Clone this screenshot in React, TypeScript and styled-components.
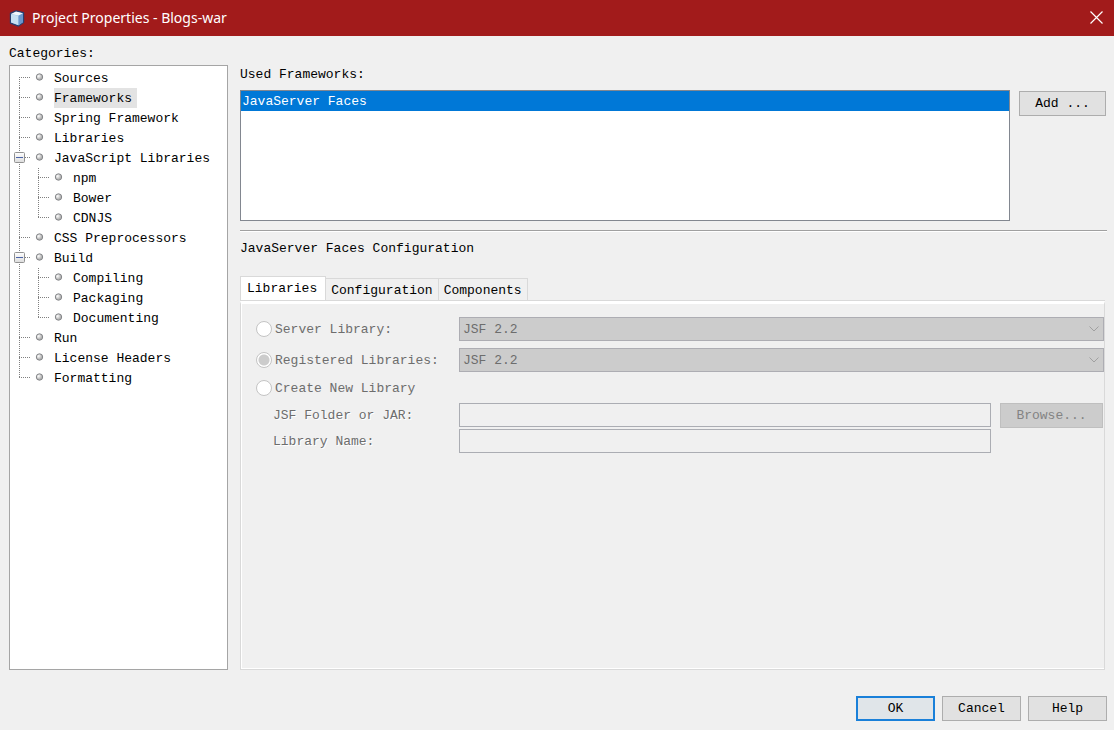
import React, { useState } from "react";
import styled, { createGlobalStyle, css } from "styled-components";

const GlobalStyle = createGlobalStyle`
  *, *::before, *::after { box-sizing: border-box; }
  body { margin: 0; background: #f0f0f0; }
  body, button, input, select {
    font-family: "Liberation Mono", "Courier New", monospace;
    font-size: 13px;
    line-height: 20px;
    color: #000;
  }
`;

const Dialog = styled.div`
  display: flex;
  flex-direction: column;
  min-height: 100vh;
`;

const TitleBar = styled.header`
  display: flex;
  align-items: center;
  gap: 7px;
  height: 36px;
  padding: 0 9px;
  background: #a21b1b;
  color: #fff;
`;

const Title = styled.h1`
  flex: 1;
  margin: 0;
  font: 400 14px/20px "Noto Sans", "Open Sans", sans-serif;
`;

const CloseButton = styled.button`
  display: flex;
  padding: 0 2px 2px;
  border: 0;
  background: none;
`;

const Body = styled.main`
  flex: 1;
  display: flex;
  gap: 12px;
  padding: 8px 7px 0 9px;
`;

const Sidebar = styled.nav`
  display: flex;
  flex-direction: column;
  gap: 1px;
  width: 219px;
`;

const Label = styled.h2`
  margin: 0;
  font-size: 13px;
  font-weight: 400;
  line-height: 20px;
`;

const Tree = styled.ul`
  flex: 1;
  margin: 0;
  padding: 2px 0;
  list-style: none;
  border: 1px solid #a5a5a5;
  background: #fff;
`;

const TreeRow = styled.li`
  display: flex;
  height: 20px;
`;

const TreeLabel = styled.button<{ $selected: boolean }>`
  height: 20px;
  padding: 1px 5px 0 0;
  border: 0;
  background: ${(p) => (p.$selected ? "#e3e3e3" : "transparent")};
`;

const Content = styled.section`
  flex: 1;
  min-width: 0;
  display: flex;
  flex-direction: column;
  padding-top: 21px;
`;

const FrameworksRow = styled.div`
  display: flex;
  align-items: flex-start;
  gap: 9px;
  margin-top: 5px;
  padding: 0 1px 9px 0;
  border-bottom: 1px solid #a0a0a0;
  box-shadow: 0 1px #fff;
`;

const FrameworkList = styled.ul`
  flex: 1;
  height: 131px;
  margin: 0;
  padding: 0;
  list-style: none;
  border: 1px solid #828790;
  background: #fff;
`;

const FrameworkItem = styled.li`
  height: 20px;
  padding: 1px 1px 0;
  background: #0078d7;
  color: #fff;
`;

const Button = styled.button<{ $width: number; $primary?: boolean }>`
  width: ${(p) => p.$width}px;
  height: 25px;
  padding: 0;
  border: 1px solid #adadad;
  background: #e1e1e1;
  ${(p) =>
    p.$primary &&
    css`
      border: 2px solid #1a80d9;
      background: #e0e5e9;
    `}
  &:disabled {
    border-color: #bfbfbf;
    background: #ccc;
    color: #838383;
  }
`;

const AddSlot = styled.div`
  display: flex;
  padding-top: 1px;
`;

const ConfigHeading = styled(Label)`
  margin-top: 8px;
`;

const TabList = styled.div`
  display: flex;
  align-items: flex-end;
  margin-top: 17px;
`;

const Tab = styled.button<{ $active: boolean }>`
  height: ${(p) => (p.$active ? 25 : 23)}px;
  padding: ${(p) => (p.$active ? "0 8px 1px 6px" : "1px 5px 0")};
  border: 1px solid #d9d9d9;
  border-left-width: ${(p) => (p.$active ? 1 : 0)}px;
  border-bottom: 0;
  background: ${(p) => (p.$active ? "#fff" : "#f0f0f0")};
`;

const TabPanel = styled.div`
  flex: 1;
  margin-right: 2px;
  padding: 12px 0 12px 14px;
  border: 1px solid #d9d9d9;
  border-top: 3px solid #fff;
  box-shadow: inset 1px 0 #fff, inset 0 -1px #fff, 0 -1px #d9d9d9;
`;

const Form = styled.form`
  display: grid;
  grid-template-columns: 195px 1fr 103px;
  grid-template-rows: 31px 31px 24px 26px 24px;
  column-gap: 9px;
  align-items: start;
  padding: 1px 1px 0 0;
`;

const RadioLabel = styled.label<{ $short?: boolean }>`
  display: flex;
  align-items: center;
  gap: 3px;
  height: ${(p) => (p.$short ? 18 : 24)}px;
  padding-left: 1px;
  white-space: nowrap;
  color: #6d6d6d;
`;

const RadioText = styled.span`
  padding-top: 2px;
`;

const Radio = styled.input`
  appearance: none;
  flex: none;
  width: 16px;
  height: 16px;
  margin: 0;
  border: 1px solid #c4c4c4;
  border-radius: 50%;
  background: #fff;
  &:checked {
    background: radial-gradient(circle, #ccc 5px, #fff 6px);
  }
`;

const FieldLabel = styled.label`
  padding-left: 18px;
  line-height: 26px;
  color: #6d6d6d;
  text-shadow: 1px 1px #fff;
`;

const SelectBox = styled.div`
  grid-column: 2 / -1;
  display: grid;
  align-items: center;
  margin-right: -1px;
  > * { grid-area: 1 / 1; }
  > svg { justify-self: end; margin-right: 5px; }
`;

const Select = styled.select`
  appearance: none;
  width: 100%;
  height: 24px;
  padding: 1px 3px 0;
  border: 1px solid #adadb3;
  border-radius: 0;
  background: #ccc;
  &:disabled { color: #6d6d6d; opacity: 1; }
`;

const TextField = styled.input`
  width: 100%;
  height: 24px;
  padding: 0 3px;
  border: 1px solid #abadb3;
  background: #f0f0f0;
`;

const BrowseButton = styled(Button)`
  grid-column: 3;
`;

const Footer = styled.footer`
  display: flex;
  justify-content: flex-end;
  gap: 7px;
  padding: 26px 7px 9px;
`;

type Node = { label: string; level?: number; open?: boolean; last?: boolean };

const nodes: Node[] = [
  { label: "Sources" },
  { label: "Frameworks" },
  { label: "Spring Framework" },
  { label: "Libraries" },
  { label: "JavaScript Libraries", open: true },
  { label: "npm", level: 1 },
  { label: "Bower", level: 1 },
  { label: "CDNJS", level: 1, last: true },
  { label: "CSS Preprocessors" },
  { label: "Build", open: true },
  { label: "Compiling", level: 1 },
  { label: "Packaging", level: 1 },
  { label: "Documenting", level: 1, last: true },
  { label: "Run" },
  { label: "License Headers" },
  { label: "Formatting", last: true },
];

const TreeGuide = ({ node, first }: { node: Node; first: boolean }) => {
  const level = node.level ?? 0;
  const x = 9 + level * 19;
  const endY = node.last ? 10 : 20;
  return (
    <svg width={44 + level * 19} height="20" aria-hidden="true">
      <g stroke="#808080" strokeDasharray="1 1">
        {level === 1 && <path d="M9.5 0V20" />}
        <path d={`M${x + 0.5} ${first ? 9 : 0}V${endY}`} />
        <path d={`M${x} 9.5H${x + 11}`} />
      </g>
      {node.open && (
        <g>
          <rect x="4.5" y="4.5" width="10" height="10" rx="1" fill="url(#expander)" stroke="#919191" />
          <path d="M6 9.5H13" stroke="#4b63a7" />
        </g>
      )}
      <circle cx={x + 20.5} cy="9" r="3.2" fill="url(#bullet)" stroke="#85878a" />
    </svg>
  );
};

const Chevron = () => (
  <svg width="10" height="6" aria-hidden="true" pointerEvents="none">
    <path d="M.5.5L5 5L9.5.5" fill="none" stroke="#a0a0a0" />
  </svg>
);

const CubeIcon = () => (
  <svg width="16" height="17" viewBox="0 0 16 17" aria-hidden="true">
    <path d="M7 1L14.5 2.8V12.5L9.5 16L1.5 13V3.5Z" fill="#8fbce4" stroke="#2b3f70" strokeWidth="1.4" strokeLinejoin="round" />
    <path d="M7 1.5L14 3.2L9.5 5.6L2 3.9Z" fill="#f1f7fc" />
    <path d="M2 4.2L9.5 5.8V15.3L2 12.6Z" fill="#c6e0f3" />
    <path d="M14 3.5L9.5 5.8V15.3L14 12.2Z" fill="#6b97cd" />
  </svg>
);

const tabs = ["Libraries", "Configuration", "Components"];

export default function App() {
  const [selected, setSelected] = useState("Frameworks");
  const [tab, setTab] = useState("Libraries");

  return (
    <Dialog>
      <GlobalStyle />
      <TitleBar>
        <CubeIcon />
        <Title>Project Properties - Blogs-war</Title>
        <CloseButton aria-label="Close">
          <svg width="13" height="13" aria-hidden="true">
            <path d="M.5.5L12.5 12.5M12.5.5L.5 12.5" stroke="#fff" strokeWidth="1.2" />
          </svg>
        </CloseButton>
      </TitleBar>
      <svg width="0" height="0" display="block" aria-hidden="true">
        <defs>
          <linearGradient id="expander" x2="0" y2="1">
            <stop stopColor="#fff" />
            <stop offset="1" stopColor="#dcdcdc" />
          </linearGradient>
          <radialGradient id="bullet" cx=".35" cy=".35">
            <stop stopColor="#fff" />
            <stop offset="1" stopColor="#b4b4b4" />
          </radialGradient>
        </defs>
      </svg>
      <Body>
        <Sidebar>
          <Label>Categories:</Label>
          <Tree>
            {nodes.map((node, i) => (
              <TreeRow key={node.label}>
                <TreeGuide node={node} first={i === 0} />
                <TreeLabel $selected={selected === node.label} onClick={() => setSelected(node.label)}>
                  {node.label}
                </TreeLabel>
              </TreeRow>
            ))}
          </Tree>
        </Sidebar>
        <Content>
          <Label>Used Frameworks:</Label>
          <FrameworksRow>
            <FrameworkList role="listbox" aria-label="Used Frameworks">
              <FrameworkItem role="option" aria-selected="true">JavaServer Faces</FrameworkItem>
            </FrameworkList>
            <AddSlot>
              <Button $width={87}>Add ...</Button>
            </AddSlot>
          </FrameworksRow>
          <ConfigHeading>JavaServer Faces Configuration</ConfigHeading>
          <TabList role="tablist">
            {tabs.map((name) => (
              <Tab key={name} role="tab" aria-selected={tab === name} $active={tab === name} onClick={() => setTab(name)}>
                {name}
              </Tab>
            ))}
          </TabList>
          <TabPanel role="tabpanel">
            <Form>
              <RadioLabel>
                <Radio type="radio" name="source" disabled />
                <RadioText>Server Library:</RadioText>
              </RadioLabel>
              <SelectBox>
                <Select aria-label="Server Library" disabled>
                  <option>JSF 2.2</option>
                </Select>
                <Chevron />
              </SelectBox>
              <RadioLabel>
                <Radio type="radio" name="source" defaultChecked disabled />
                <RadioText>Registered Libraries:</RadioText>
              </RadioLabel>
              <SelectBox>
                <Select aria-label="Registered Libraries" disabled>
                  <option>JSF 2.2</option>
                </Select>
                <Chevron />
              </SelectBox>
              <RadioLabel $short>
                <Radio type="radio" name="source" disabled />
                <RadioText>Create New Library</RadioText>
              </RadioLabel>
              <span />
              <span />
              <FieldLabel htmlFor="folder">JSF Folder or JAR:</FieldLabel>
              <TextField id="folder" disabled />
              <BrowseButton type="button" $width={103} disabled>Browse...</BrowseButton>
              <FieldLabel htmlFor="name">Library Name:</FieldLabel>
              <TextField id="name" disabled />
            </Form>
          </TabPanel>
        </Content>
      </Body>
      <Footer>
        <Button $width={79} $primary>OK</Button>
        <Button $width={79}>Cancel</Button>
        <Button $width={79}>Help</Button>
      </Footer>
    </Dialog>
  );
}
